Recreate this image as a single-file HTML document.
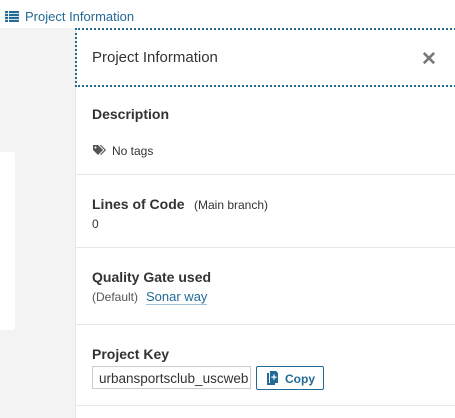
<!DOCTYPE html>
<html><head><style>
*{box-sizing:border-box;margin:0;padding:0}
body{width:455px;height:418px;overflow:hidden;background:#f3f3f3;font-family:"Liberation Sans",Arial,sans-serif;color:#333;position:relative}
.top{position:absolute;left:0;top:0;width:455px;height:28px;background:#fff}
.top .t{position:absolute;left:25px;top:9px;font-size:13px;color:#236a97}
.card{position:absolute;left:0;top:152px;width:15px;height:178px;background:#fff;border-radius:0 2px 2px 0}
.panel{position:absolute;left:75px;top:28px;width:380px;height:390px;background:#fff;border-left:1px solid #e6e6e6}
.hdr{position:absolute;left:-1px;top:0;width:381px;height:59px;border:2px dotted #236a97;border-right:none}
.hdr .t{position:absolute;left:15px;top:19px;font-size:15px;color:#333}
.x{position:absolute;left:344px;top:18px;font-size:19px;font-weight:bold;color:#777}
.sec{position:absolute;left:0;width:380px;border-bottom:1px solid #e6e6e6}
.h{position:absolute;left:16px;font-size:14px;font-weight:bold;color:#333}
.s{position:absolute;font-size:12px;color:#333}
</style></head><body>
<div class="top">
<svg style="position:absolute;left:5px;top:11px" width="14" height="11" viewBox="0 0 14 11" fill="#236a97"><rect x="0" y="0" width="3" height="2.2"/><rect x="4" y="0" width="10" height="2.2"/><rect x="0" y="3" width="3" height="2.2"/><rect x="4" y="3" width="10" height="2.2"/><rect x="0" y="6" width="3" height="2.2"/><rect x="4" y="6" width="10" height="2.2"/><rect x="0" y="9" width="3" height="2"/><rect x="4" y="9" width="10" height="2"/></svg>
<span class="t">Project Information</span></div>
<div class="card"></div>
<div class="panel">
<div class="hdr"><span class="t">Project Information</span><span class="x">✕</span></div>
<div class="sec" style="top:59px;height:88px">
<span class="h" style="top:19px">Description</span>
<svg style="position:absolute;left:17px;top:58px" width="14" height="11" viewBox="0 0 14 11" fill="#555"><path d="M0 0h5l5 5-5 5-5-5z"/><circle cx="2.5" cy="2.5" r="1" fill="#fff"/><path d="M6.5 0h1.5l5 5-5 5-0.8-0.8 4.2-4.2z"/></svg>
<span class="s" style="left:36px;top:57px">No tags</span>
</div>
<div class="sec" style="top:147px;height:73px">
<span class="h" style="top:21px">Lines of Code</span><span class="s" style="left:118px;top:23px">(Main branch)</span>
<span class="s" style="left:16px;top:42px">0</span>
</div>
<div class="sec" style="top:220px;height:77px">
<span class="h" style="top:21px">Quality Gate used</span>
<span class="s" style="left:16px;top:42px;color:#555">(Default)</span>
<span style="position:absolute;left:70px;top:41px;font-size:13px;color:#236a97;border-bottom:1px solid #9fc0d6;line-height:15px">Sonar way</span>
</div>
<div class="sec" style="top:297px;height:81px">
<span class="h" style="top:21px">Project Key</span>
<div style="position:absolute;left:16px;top:41px;width:159px;height:23px;border:1px solid #ccc;font-size:13.5px;padding:4px 6px;overflow:hidden;white-space:nowrap;color:#333">urbansportsclub_uscweb</div>
<div style="position:absolute;left:180px;top:41px;width:68px;height:24px;border:1px solid #236a97;border-radius:2px;color:#236a97;font-weight:bold;font-size:12px">
<svg style="position:absolute;left:10px;top:4px" width="11" height="14" viewBox="0 0 11 14" fill="#236a97"><path d="M0 2h2v10h6v2H0z"/><path d="M3 0h6l2 2v10H3z"/><path d="M6.4 3.5h1.2v2h2v1.2h-2v2H6.4v-2h-2V5.5h2z" fill="#fff"/></svg>
<span style="position:absolute;left:28px;top:5px">Copy</span></div>
</div>
</div>
</body></html>
